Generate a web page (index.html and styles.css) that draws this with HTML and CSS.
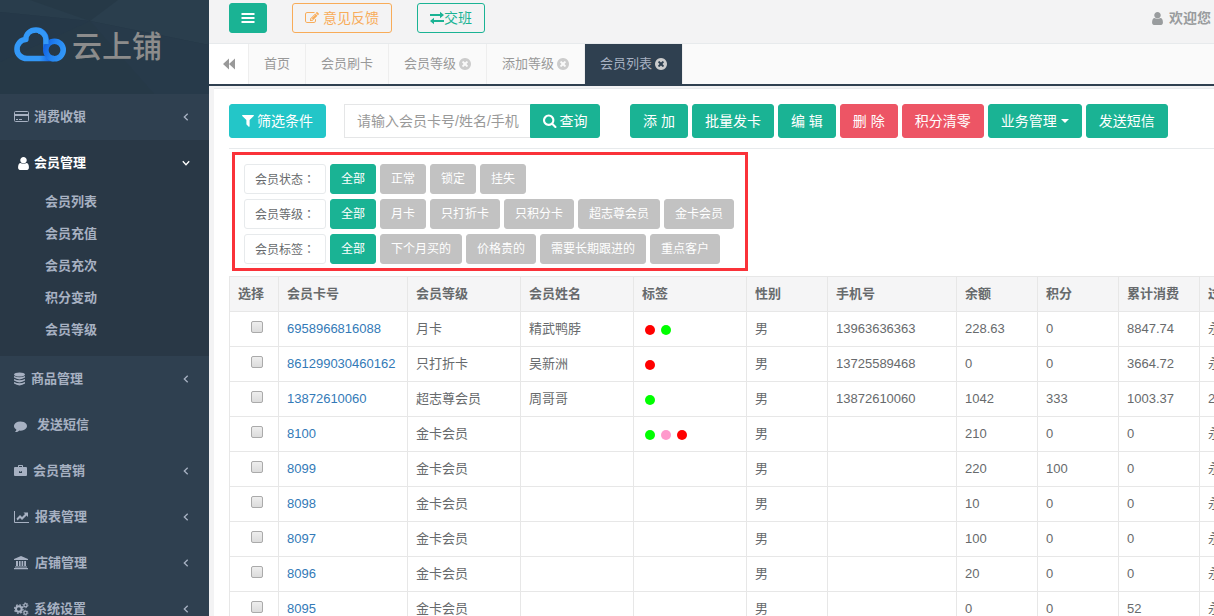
FILE: index.html
```html
<!DOCTYPE html>
<html lang="zh-CN">
<head>
<meta charset="utf-8">
<title>云上铺 - 会员列表</title>
<link rel="stylesheet" href="styles.css">
</head>
<body>
<svg class="defs" aria-hidden="true">
  <symbol id="user" viewBox="256 128 1280 1536"><path d="M1536 1399q0 109-62.5 187t-150.5 78h-854q-88 0-150.5-78t-62.5-187q0-85 8.5-160.5t31.5-152 58.5-131 94-89 134.5-34.5q131 128 313 128t313-128q76 0 134.5 34.5t94 89 58.5 131 31.5 152 8.5 160.5zm-256-887q0 159-112.5 271.5t-271.5 112.5-271.5-112.5-112.5-271.5 112.5-271.5 271.5-112.5 271.5 112.5 112.5 271.5z"/></symbol>
  <symbol id="close" viewBox="128 128 1536 1536"><path d="M1277 1122q0-26-19-45l-181-181 181-181q19-19 19-45 0-27-19-46l-90-90q-19-19-46-19-26 0-45 19l-181 181-181-181q-19-19-45-19-27 0-46 19l-90 90q-19 19-19 46 0 26 19 45l181 181-181 181q-19 19-19 45 0 27 19 46l90 90q19 19 46 19 26 0 45-19l181-181 181 181q19 19 45 19 27 0 46-19l90-90q19-19 19-46zm387-226q0 209-103 385.5t-279.5 279.5-385.5 103-385.5-103-279.5-279.5-103-385.5 103-385.5 279.5-279.5 385.5-103 385.5 103 279.5 279.5 103 385.5z"/></symbol>
  <symbol id="chev" viewBox="0 0 6 8"><path d="M4.7 .8 1.3 4l3.4 3.2" fill="none" stroke="currentColor" stroke-width="1.3"/></symbol>
</svg>
<div class="app">
  <aside class="sidebar">
    <div class="brand">
      <svg class="facets" viewBox="0 0 209 94" preserveAspectRatio="none" aria-hidden="true">
        <path d="M0 12 90 21 30 0H0z" fill="#293d4c"/><path d="M90 21 118 0h91v45z" fill="#2a3e4d"/><path d="M90 21 154 94H209V45z" fill="#273a4a"/><path d="M0 12 90 21 0 62z" fill="#253848"/>
      </svg>
      <svg class="logo" viewBox="0 0 52 35" aria-hidden="true">
        <defs>
          <linearGradient id="ring" gradientUnits="userSpaceOnUse" x1="29" y1="16" x2="52" y2="24"><stop offset="0" stop-color="#0f5ce0"/><stop offset=".5" stop-color="#2384f0"/><stop offset="1" stop-color="#3398f7"/></linearGradient>
          <linearGradient id="cloud" gradientUnits="userSpaceOnUse" x1="0" y1="0" x2="42" y2="0"><stop offset="0" stop-color="#3398f7"/><stop offset=".6" stop-color="#3398f7"/><stop offset=".85" stop-color="#1468e4"/><stop offset="1" stop-color="#2384f0"/></linearGradient>
        </defs>
        <path d="M32 21V12.500C32 7 27.500 3 22 3 16 3 12 7 11.800 12.500 7 12.500 3 16.700 3 22.200 3 27.500 7.500 31.500 13 31.500H40" fill="none" stroke="url(#cloud)" stroke-width="5.600" stroke-linejoin="round"/>
        <circle cx="40.500" cy="23" r="8.700" fill="none" stroke="url(#ring)" stroke-width="5.600"/>
        <path d="M24.500 4C28.500 5 31.500 8 32 12.500V17" fill="none" stroke="#3398f7" stroke-width="5"/>
      </svg>
      <span class="brand-name">云上铺</span>
    </div>
    <nav>
      <a class="item" href="#"><svg class="w16" viewBox="0 0 16 14"><path d="M1.500 1.500h12q1 0 1 1v8q0 1-1 1h-12q-1 0-1-1v-8q0-1 1-1z" fill="none" stroke="currentColor"/><path d="M1 4h13v2H1zM2 9h2v1H2zM5 9h3v1H5z"/></svg><span>消费收银</span><svg class="arrow"><use href="#chev"/></svg></a>
      <div class="group">
        <a class="item on" href="#"><svg class="w16" viewBox="0 0 16 14"><use href="#user" x="4" y="1" width="11" height="13"/></svg><span>会员管理</span><svg class="arrow down"><use href="#chev"/></svg></a>
        <a class="sub" href="#">会员列表</a>
        <a class="sub" href="#">会员充值</a>
        <a class="sub" href="#">会员充次</a>
        <a class="sub" href="#">积分变动</a>
        <a class="sub" href="#">会员等级</a>
      </div>
      <a class="item" href="#"><svg class="w13" viewBox="0 0 13 14"><ellipse cx="5.500" cy="2.500" rx="5.500" ry="2"/><path d="M0 4q5.500 2.600 11 0v1.600q-5.500 3.600-11 0zM0 7q5.500 2.600 11 0v1.600q-5.500 3.600-11 0zM0 10q5.500 2.600 11 0v1.600q-5.500 3.600-11 0z"/></svg><span>商品管理</span><svg class="arrow"><use href="#chev"/></svg></a>
      <a class="item" href="#"><svg class="w19" viewBox="0 0 19 14"><svg x="0" y="1" width="13" height="13" viewBox="0 0 1792 1792"><path d="M1792 896q0 174-120 321.500t-326 233-450 85.500q-70 0-145-8-198 175-460 242-49 14-114 22-17 2-30.500-9t-17.500-29q-3-9 6-28q60-70 110-130 60-80 90-190-157-89-247.500-220t-90.500-281q0-130 71-248.500t191-204.500 286-136.500 348-50.500q244 0 450 85.500t326 233 120 321.500z"/></svg></svg><span>发送短信</span></a>
      <a class="item" href="#"><svg class="w15" viewBox="0 0 15 14"><path fill-rule="evenodd" d="M4 3V1.800Q4 1 4.800 1h3.400Q9 1 9 1.800V3h3q1 0 1 1v7q0 1-1 1H1q-1 0-1-1V4q0-1 1-1zm1 0h3V2H5zm0 4v2h3V7H7.300v.8H5.700V7z"/></svg><span>会员营销</span><svg class="arrow"><use href="#chev"/></svg></a>
      <a class="item" href="#"><svg class="w17" viewBox="0 0 17 14"><path d="M.5 1v11.500H15" fill="none" stroke="currentColor"/><path d="m2.500 8.500 3.500-3.500 2 2 3-3L9.500 2.500H14V7l-1.500-1.500L8 10 6 8l-2.500 2.500z"/></svg><span>报表管理</span><svg class="arrow"><use href="#chev"/></svg></a>
      <a class="item" href="#"><svg class="w17" viewBox="0 0 17 14"><path d="M7 0l7 3v1H0V3zM2 5h2v5H2zM5 5h1.600v5H5zM7.600 5h1.600v5H7.600zM10.200 5H12v5h-1.800zM1 10.500h12v1H1zM0 12h14v1.200H0z"/></svg><span>店铺管理</span><svg class="arrow"><use href="#chev"/></svg></a>
      <a class="item" href="#"><svg class="w16" viewBox="0 0 16 14"><g fill="none" stroke="currentColor"><circle cx="4.800" cy="7" r="2.800" stroke-width="2"/><circle cx="4.800" cy="7" r="4.200" stroke-width="1.400" stroke-dasharray="1.700 1.600"/><circle cx="11.500" cy="3.300" r="1.600" stroke-width="1.300"/><circle cx="11.500" cy="3.300" r="2.500" stroke-dasharray="1.200 1.400"/><circle cx="11.500" cy="10.700" r="1.600" stroke-width="1.300"/><circle cx="11.500" cy="10.700" r="2.500" stroke-dasharray="1.200 1.400"/></g></svg><span>系统设置</span><svg class="arrow"><use href="#chev"/></svg></a>
    </nav>
  </aside>

  <main class="main">
    <header class="topbar">
      <button class="btn top menu" aria-label="切换菜单"><svg class="i14" viewBox="0 0 14 14"><path d="M.5 2h13v2H.5zM.5 6h13v2H.5zM.5 10h13v2H.5z"/></svg></button>
      <button class="btn top warn"><svg class="i14" viewBox="0 0 1792 1792"><path d="M888 1184l116-116-152-152-116 116v56h96v96h56zm440-720q-16-16-33 1l-350 350q-17 17-1 33t33-1l350-350q17-17 1-33zm80 594v190q0 119-84.500 203.500t-203.500 84.500h-832q-119 0-203.500-84.500t-84.500-203.500v-832q0-119 84.500-203.500t203.500-84.500h832q63 0 117 25 15 7 18 23 3 17-9 29l-49 49q-14 14-32 8-23-6-45-6h-832q-66 0-113 47t-47 113v832q0 66 47 113t113 47h832q66 0 113-47t47-113v-126q0-13 9-22l64-64q15-15 35-7t20 29zm-96-738l288 288-672 672h-288v-288zm444 132l-92 92-288-288 92-92q28-28 68-28t68 28l152 152q28 28 28 68t-28 68z"/></svg><span>意见反馈</span></button>
      <button class="btn top line"><svg class="i14" viewBox="0 0 14 14"><path d="M0 3h10V.8L14 4l-4 3.200V5H0zM14 9H4V6.800L0 10l4 3.200V11h10z"/></svg><span>交班</span></button>
      <div class="welcome"><svg class="person"><use href="#user"/></svg><span>欢迎您</span></div>
    </header>

    <div class="tabs">
      <button class="back" aria-label="向左滚动"><svg class="i14" viewBox="0 0 14 14"><path d="M7 1.500v11L1 7zM13 1.500v11L7 7z"/></svg></button>
      <a class="tab" href="#">首页</a>
      <a class="tab" href="#">会员刷卡</a>
      <a class="tab" href="#">会员等级<svg class="x"><use href="#close"/></svg></a>
      <a class="tab" href="#">添加等级<svg class="x"><use href="#close"/></svg></a>
      <a class="tab current" href="#">会员列表<svg class="x"><use href="#close"/></svg></a>
    </div>

    <section class="content">
      <div class="toolbar">
        <button class="btn info"><svg class="i12" viewBox="180 256 1430 1430"><path d="M1595 295q17 41-14 70l-493 493v742q0 42-39 59-13 5-25 5-27 0-45-19l-256-256q-19-19-19-45v-486l-493-493q-31-29-14-70 17-39 59-39h1280q42 0 59 39z"/></svg><span>筛选条件</span></button>
        <form class="search">
          <input type="text" aria-label="搜索会员" placeholder="请输入会员卡号/姓名/手机">
          <button class="btn" type="button"><svg class="i14" viewBox="64 64 1728 1728"><path d="M1216 832q0-185-131.500-316.500t-316.500-131.500-316.500 131.500-131.500 316.500 131.500 316.500 316.500 131.500 316.500-131.500 131.500-316.500zm512 832q0 52-38 90t-90 38q-54 0-90-38l-343-342q-179 124-399 124-143 0-273.500-55.500t-225-150-150-225-55.500-273.500 55.500-273.500 150-225 225-150 273.500-55.500 273.500 55.500 225 150 150 225 55.500 273.500q0 220-124 399l343 343q37 37 37 90z"/></svg><span>查询</span></button>
        </form>
        <div class="actions">
          <button class="btn">添 加</button>
          <button class="btn">批量发卡</button>
          <button class="btn">编 辑</button>
          <button class="btn danger">删 除</button>
          <button class="btn danger">积分清零</button>
          <button class="btn drop">业务管理<i class="caret"></i></button>
          <button class="btn">发送短信</button>
        </div>
      </div>

      <div class="filters">
        <div class="frow"><span class="flabel">会员状态<span class="colon" lang="zh-TW">：</span></span><button class="chip on">全部</button><button class="chip">正常</button><button class="chip">锁定</button><button class="chip">挂失</button></div>
        <div class="frow"><span class="flabel">会员等级<span class="colon" lang="zh-TW">：</span></span><button class="chip on">全部</button><button class="chip">月卡</button><button class="chip">只打折卡</button><button class="chip">只积分卡</button><button class="chip">超志尊会员</button><button class="chip">金卡会员</button></div>
        <div class="frow"><span class="flabel">会员标签<span class="colon" lang="zh-TW">：</span></span><button class="chip on">全部</button><button class="chip">下个月买的</button><button class="chip">价格贵的</button><button class="chip">需要长期跟进的</button><button class="chip">重点客户</button></div>
      </div>

      <table class="grid">
        <colgroup><col class="c49"><col class="c129"><col class="c113"><col class="c113"><col class="c113"><col class="c81"><col class="c129"><col class="c81"><col class="c81"><col class="c81"><col class="c129"></colgroup>
        <thead><tr><th>选择</th><th>会员卡号</th><th>会员等级</th><th>会员姓名</th><th>标签</th><th>性别</th><th>手机号</th><th>余额</th><th>积分</th><th>累计消费</th><th>过期时间</th></tr></thead>
        <tbody>
          <tr><td class="pick"><input type="checkbox" aria-label="选择 6958966816088"></td><td><a href="#">6958966816088</a></td><td>月卡</td><td>精武鸭脖</td><td><i class="dot red"></i><i class="dot green"></i></td><td>男</td><td>13963636363</td><td>228.63</td><td>0</td><td>8847.74</td><td>永久有效</td></tr>
          <tr><td class="pick"><input type="checkbox" aria-label="选择 861299030460162"></td><td><a href="#">861299030460162</a></td><td>只打折卡</td><td>吴新洲</td><td><i class="dot red"></i></td><td>男</td><td>13725589468</td><td>0</td><td>0</td><td>3664.72</td><td>永久有效</td></tr>
          <tr><td class="pick"><input type="checkbox" aria-label="选择 13872610060"></td><td><a href="#">13872610060</a></td><td>超志尊会员</td><td>周哥哥</td><td><i class="dot green"></i></td><td>男</td><td>13872610060</td><td>1042</td><td>333</td><td>1003.37</td><td>2018</td></tr>
          <tr><td class="pick"><input type="checkbox" aria-label="选择 8100"></td><td><a href="#">8100</a></td><td>金卡会员</td><td></td><td><i class="dot green"></i><i class="dot pink"></i><i class="dot red"></i></td><td>男</td><td></td><td>210</td><td>0</td><td>0</td><td>永久有效</td></tr>
          <tr><td class="pick"><input type="checkbox" aria-label="选择 8099"></td><td><a href="#">8099</a></td><td>金卡会员</td><td></td><td></td><td>男</td><td></td><td>220</td><td>100</td><td>0</td><td>永久有效</td></tr>
          <tr><td class="pick"><input type="checkbox" aria-label="选择 8098"></td><td><a href="#">8098</a></td><td>金卡会员</td><td></td><td></td><td>男</td><td></td><td>10</td><td>0</td><td>0</td><td>永久有效</td></tr>
          <tr><td class="pick"><input type="checkbox" aria-label="选择 8097"></td><td><a href="#">8097</a></td><td>金卡会员</td><td></td><td></td><td>男</td><td></td><td>100</td><td>0</td><td>0</td><td>永久有效</td></tr>
          <tr><td class="pick"><input type="checkbox" aria-label="选择 8096"></td><td><a href="#">8096</a></td><td>金卡会员</td><td></td><td></td><td>男</td><td></td><td>20</td><td>0</td><td>0</td><td>永久有效</td></tr>
          <tr><td class="pick"><input type="checkbox" aria-label="选择 8095"></td><td><a href="#">8095</a></td><td>金卡会员</td><td></td><td></td><td>男</td><td></td><td>0</td><td>0</td><td>52</td><td>永久有效</td></tr>
        </tbody>
      </table>
    </section>
  </main>
</div>
</body>
</html>
```
FILE: styles.css
```css
* { box-sizing: border-box; }
body {
  margin: 0;
  font: 13px/18px "Liberation Sans", "Noto Sans CJK SC", sans-serif;
  color: #676a6c;
  background: #f3f3f4;
}
a { text-decoration: none; color: inherit; }
button, input { font: inherit; }
svg { fill: currentColor; flex: none; display: block; }
.defs { display: none; }
.app { display: flex; height: 100vh; overflow: hidden; }

/* sidebar */
.sidebar { width: 209px; flex: none; background: #2f4050; color: #a7b1c2; font-weight: 600; }
.brand {
  position: relative;
  display: flex;
  align-items: center;
  gap: 6px;
  height: 94px;
  padding: 0 14px 6px;
  background: #263947;
}
.facets { position: absolute; inset: 0; width: 100%; height: 100%; }
.logo { position: relative; width: 52px; height: 35px; }
.brand-name { position: relative; padding-top: 5px; font-size: 30px; line-height: 36px; font-weight: 500; color: #8c8c8c; }
.item { display: flex; align-items: center; gap: 4px; height: 46px; padding: 0 20px 0 14px; }
.item svg { height: 14px; }
.w13 { width: 13px; }
.w15 { width: 15px; }
.w16 { width: 16px; }
.w17 { width: 17px; }
.w19 { width: 19px; }
.item .arrow { width: 6px; height: 8px; margin-left: auto; }
.item .down { transform: rotate(-90deg); }
.on { color: #fff; }
.group { background: #293846; padding-bottom: 10px; }
.sub { display: block; padding: 7px 0 7px 45px; }

/* top bar */
.main { flex: 1; min-width: 0; }
.topbar {
  display: flex;
  align-items: flex-start;
  gap: 25px;
  height: 44px;
  padding: 3px 3px 0 20px;
  border-bottom: 1px solid #e7eaec;
}
.btn {
  display: flex;
  align-items: center;
  justify-content: center;
  gap: 3px;
  height: 34px;
  padding: 0 12px;
  border: 1px solid #1ab394;
  border-radius: 3px;
  background: #1ab394;
  color: #fff;
  font-size: 14px;
  white-space: nowrap;
}
.top { height: 30px; padding: 0 11px; }
.warn { gap: 4px; padding: 0 12px; background: none; border-color: #f8ac59; color: #f8ac59; }
.line { gap: 0; padding: 0 12px; background: none; color: #1ab394; }
.i14 { width: 14px; height: 14px; }
.i12 { width: 12px; height: 12px; }
.welcome { display: flex; align-items: center; gap: 6px; height: 30px; margin-left: auto; font-size: 14px; font-weight: 600; color: #999c9e; }
.person { width: 11px; height: 13px; }

/* tabs */
.tabs { display: flex; height: 42px; background: #fafafa; border-bottom: 2px solid #2f4050; color: #999; }
.back { display: flex; align-items: center; justify-content: center; width: 40px; padding: 0; background: #fff; border: 0; border-right: 1px solid #eee; color: #999; }
.tab { display: flex; align-items: center; gap: 3px; padding: 0 15px; border-right: 1px solid #eee; white-space: nowrap; }
.x { width: 12px; height: 12px; color: #ccc; }
.current { background: #2f4050; color: #a7b1c2; }

/* content */
.content { margin: 2px 0 0 5px; padding: 15px 0 0 15px; background: #fff; border-top: 1px solid #e7eaec; overflow: hidden; }
.toolbar { display: flex; padding-bottom: 10px; border-bottom: 1px solid #e7eaec; }
.info { gap: 3px; padding: 0 12px; background: #23c6c8; border-color: #23c6c8; }
.search { display: flex; margin: 0 30px 0 18px; }
.search input { width: 186px; height: 34px; padding: 0 10px 0 12px; border: 1px solid #e5e6e7; border-right: 0; outline: 0; font-size: 14px; }
.search input::placeholder { color: #999; opacity: 1; }
.search .btn { width: 70px; border-radius: 0 3px 3px 0; padding: 0; }
.actions { display: flex; gap: 4px; }
.danger { background: #ed5565; border-color: #ed5565; }
.drop { gap: 4px; }
.caret { border: 4px solid transparent; border-top-color: #fff; border-bottom: 0; }

.filters {
  display: flex;
  flex-direction: column;
  gap: 5px;
  width: fit-content;
  margin: 3px 0 5px 3px;
  padding: 9px 11px 4px 9px;
  border: 3px solid #fa3239;
}
.frow { display: flex; gap: 4px; font-size: 12px; }
.flabel, .chip { height: 30px; padding: 0 10px; border: 1px solid #c2c2c2; border-radius: 3px; line-height: 28px; white-space: nowrap; }
.flabel { border-color: #e7eaec; }
.colon { font-family: "Noto Sans CJK TC", sans-serif; }
.chip { background: #c2c2c2; color: #fff; }
.chip.on { background: #1ab394; border-color: #1ab394; }

/* table */
.grid { table-layout: fixed; width: 1100px; border-collapse: collapse; }
.c49 { width: 49px; }
.c81 { width: 81px; }
.c113 { width: 113px; }
.c129 { width: 129px; }
th, td { height: 35px; padding: 0 8px; border: 1px solid #e7e7e7; text-align: left; white-space: nowrap; }
th { background: #f5f5f6; font-weight: 600; }
.grid a { color: #337ab7; }
.pick { text-align: center; }
.pick input {
  appearance: none;
  display: block;
  width: 12px;
  height: 12px;
  margin: 0 auto 4px 13px;
  border: 1px solid #aaa;
  border-radius: 2px;
  background: linear-gradient(#eee, #dcdcdc);
}
.dot { display: inline-block; width: 10px; height: 10px; margin: 0 3px; border-radius: 50%; vertical-align: middle; }
.red { background: #f00; }
.green { background: #0f0; }
.pink { background: #f9c; }
```
